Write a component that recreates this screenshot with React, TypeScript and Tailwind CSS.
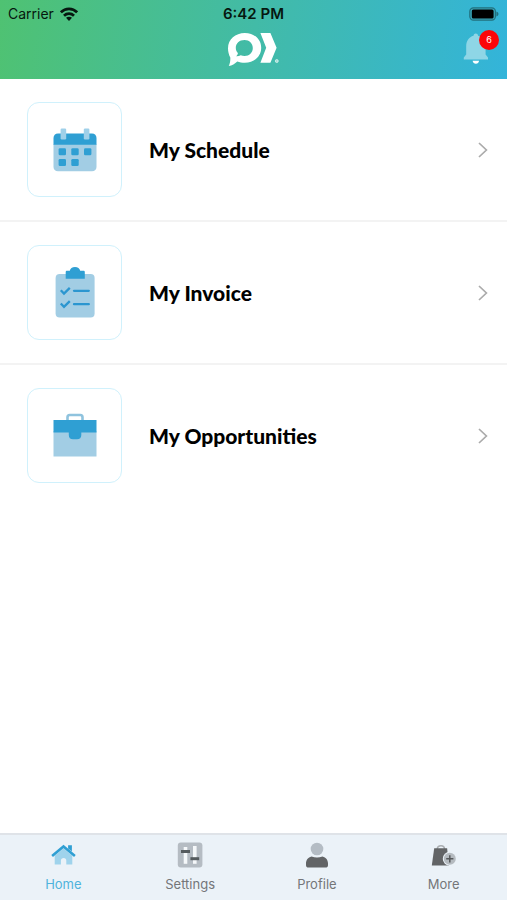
import type { ReactNode } from "react";

function WifiIcon() {
  return (
    <svg width="18" height="14" viewBox="0 0 18 14" aria-hidden="true">
      <g fill="none" stroke="#06170f" strokeWidth="2.7">
        <path d="M0.9 5.3C5.4 0.7 12.6 0.7 17.1 5.3" />
        <path d="M4 8.7C6.8 5.9 11.2 5.9 14 8.7" />
      </g>
      <path d="M9 13.9 6 10.8C7.7 9.3 10.3 9.3 12 10.8Z" fill="#06170f" />
    </svg>
  );
}

function BatteryIcon() {
  return (
    <svg width="30" height="14" viewBox="0 0 30 14" role="img" aria-label="Battery full">
      <rect x="0.8" y="0.8" width="25.6" height="12.4" rx="3.6" fill="#3aa9bd" stroke="#22717f" strokeWidth="1.2" />
      <rect x="2.8" y="2.4" width="21.8" height="9.2" rx="1.6" fill="#000" />
      <path d="M27.4 4.6C30.1 5.3 30.1 8.7 27.4 9.4Z" fill="#22717f" />
    </svg>
  );
}

function Logo() {
  return (
    <svg width="52" height="36" viewBox="0 0 52 36" role="img" aria-label="Logo">
      <path
        fill="#fff"
        fillRule="evenodd"
        d="M17.8 1C27.3 1 34.2 7.2 34.2 15.8S27.3 30.8 17.8 30.8C15 30.8 12.5 30.3 10.3 29.4 8 31.7 5 33.3 1.8 34.1 3 31.5 3.5 28.7 3.3 25.5 1.8 22.7 1 19.5 1 16.2 1 7.4 8.4 1 17.8 1ZM17.6 8C12.2 8 8.8 11.4 8.8 15.9 8.8 17.9 9.6 19.7 10.9 21 10.8 22.3 10.2 23.2 9.2 24.2 11 24.3 12.5 23.9 13.7 23.2 14.9 23.7 16.2 23.9 17.6 23.9 22.3 23.9 25.8 20.5 25.8 15.9S22.3 8 17.6 8Z"
      />
      <path fill="#fff" d="M33.4 1H43.4L49.6 15.8 43.4 30.8H33.4L39.2 15.8Z" />
      <circle cx="49.8" cy="29" r="1.5" fill="#fff" fillOpacity="0.5" stroke="#fff" strokeOpacity="0.7" strokeWidth="0.8" />
    </svg>
  );
}

function BellIcon() {
  return (
    <svg width="26" height="32" viewBox="0 0 26 32" aria-hidden="true">
      <path
        fill="#8ed6e6"
        d="M12.8 1.4C14 1.4 14.9 2.3 15.1 3.7 19.8 4.9 22.6 9 22.6 14V22.5L25 25.6V27.6H.8V25.6L3.2 22.5V14C3.2 9 5.9 4.9 10.5 3.7 10.7 2.3 11.6 1.4 12.8 1.4Z"
      />
      <path fill="#fff" d="M9.6 28.8H16.1C15.8 30.7 14.6 31.8 12.9 31.8S9.9 30.7 9.6 28.8Z" />
    </svg>
  );
}

function CalendarIcon() {
  return (
    <svg width="44" height="44" viewBox="0 0 44 44" aria-hidden="true">
      <path fill="#a2cde4" d="M.5 16H43.5V39C43.5 41.5 41.8 43.3 39 43.3H5C2.2 43.3.5 41.5.5 39Z" />
      <path fill="#2f9fd3" d="M5 5.5H39C41.8 5.5 43.5 7.4 43.5 10V16.8H.5V10C.5 7.4 2.2 5.5 5 5.5Z" />
      <g fill="#9fd0e9">
        <rect x="7.6" y=".6" width="5.6" height="10.8" rx="1.2" />
        <rect x="30.8" y=".6" width="5.6" height="10.8" rx="1.2" />
      </g>
      <g fill="#2f9fd3">
        <rect x="5.6" y="20.2" width="7.4" height="7" rx="1.3" />
        <rect x="18.3" y="20.2" width="7.4" height="7" rx="1.3" />
        <rect x="31" y="20.2" width="7.4" height="7" rx="1.3" />
        <rect x="5.6" y="31" width="7.4" height="7" rx="1.3" />
        <rect x="18.3" y="31" width="7.4" height="7" rx="1.3" />
      </g>
    </svg>
  );
}

function ClipboardIcon() {
  return (
    <svg width="40" height="54" viewBox="0 0 40 54" aria-hidden="true">
      <rect x=".6" y="8" width="39" height="43.5" rx="4" fill="#a2cde4" />
      <path fill="#2f9fd3" d="M10.7 12.8V6.2C10.7 5.2 11.2 4.8 12 4.8H14.8C15.2 2.4 17.2 1 20 1S24.8 2.4 25.2 4.8H28.4C29.3 4.8 29.8 5.2 29.8 6.2V12.8Z" />
      <g fill="none" stroke="#2b96d0" strokeWidth="2.3">
        <path d="M5.8 24.3 9 27.6 14.8 21.9M5.8 37.5 9 40.8 14.8 35.1" />
        <path strokeLinecap="round" d="M19 24.8H33.8M19 38.2H33.8" />
      </g>
    </svg>
  );
}

function BriefcaseIcon() {
  return (
    <svg width="44" height="46" viewBox="0 0 44 46" aria-hidden="true">
      <path fill="none" stroke="#8fc3de" strokeWidth="2.6" d="M14.5 7V4.3C14.5 2.8 15.2 2 16.7 2H27.3C28.8 2 29.5 2.8 29.5 4.3V7" />
      <path fill="#a2cde4" d="M.5 18H43.5V43.5H.5Z" />
      <path fill="#2f9fd3" d="M.5 7H43.5V19.5H28.3V22C28.3 24.8 26.8 26.2 24 26.2H20C17.2 26.2 15.8 24.8 15.8 22V19.5H.5Z" />
    </svg>
  );
}

function ChevronIcon() {
  return (
    <svg width="12" height="18" viewBox="0 0 12 18" aria-hidden="true">
      <path d="M2 2 9.4 9 2 16" fill="none" stroke="#ababab" strokeWidth="1.7" />
    </svg>
  );
}

function HomeIcon() {
  return (
    <svg width="26" height="26" viewBox="-0.5 0 26 26" aria-hidden="true">
      <path fill="#9fd3ec" d="M4.2 13.8 13 6.6 21.8 13.8V22.6H15.8V18.8C15.8 17 14.8 16 13.2 16S10.4 17 10.4 18.8V22.6H4.2Z" />
      <path fill="#2f9fd3" d="M17.6 3.2H21.4V9.6L17.6 6.4Z" />
      <path fill="none" stroke="#2f9fd3" strokeWidth="2.6" d="M1.6 14 13 4.4 24.4 14" />
    </svg>
  );
}

function SlidersIcon() {
  return (
    <svg width="26" height="26" viewBox="0 0 26 26" aria-hidden="true">
      <rect x=".8" y=".5" width="24.6" height="25" rx="3" fill="#b5bcc3" />
      <g fill="#f5f8fa">
        <rect x="6.7" y="5" width="3.6" height="16.8" />
        <rect x="16" y="4" width="3.6" height="17.8" />
      </g>
      <g fill="#555b5e">
        <rect x="4" y="8" width="9" height="3" />
        <rect x="13.4" y="15.2" width="8.8" height="3" />
      </g>
    </svg>
  );
}

function PersonIcon() {
  return (
    <svg width="26" height="26" viewBox="0 0 26 26" aria-hidden="true">
      <circle cx="13" cy="7" r="6.3" fill="#b4bcc4" />
      <path fill="#626466" d="M7.5 14.4Q13 16.6 18.5 14.4C22 15.2 24 18 24 21.5V23.2C24 24.7 23 25.6 21.5 25.6H4.5C3 25.6 2 24.7 2 23.2V21.5C2 18 4 15.2 7.5 14.4Z" />
    </svg>
  );
}

function BagIcon() {
  return (
    <svg width="26" height="26" viewBox="0 0 26 26" aria-hidden="true">
      <path fill="none" stroke="#a9adb0" strokeWidth="1.5" d="M6.2 7.2C6.4 4.7 7.5 3.8 10 3.8S13.4 4.7 13.6 7.2" />
      <path fill="#626466" d="M3.2 6.3H16.1L18 23.4H.8Z" />
      <circle cx="18.8" cy="16.8" r="7" fill="#ebf2f8" />
      <circle cx="18.8" cy="16.8" r="6" fill="#b5bbc0" />
      <path stroke="#55585a" strokeWidth="1.5" d="M18.8 13.2V20.4M15.2 16.8H22.4" />
    </svg>
  );
}

function MenuRow({ icon, label }: { icon: ReactNode; label: string }) {
  return (
    <li className="border-b-2 border-[#f3f3f3] last:border-transparent">
      <button type="button" className="flex w-full items-center py-[23px] pr-[18px] pl-[27px] text-left">
        <span className="flex size-[95px] shrink-0 items-center justify-center rounded-xl border border-[#d0f1fc]">
          {icon}
        </span>
        <span className="ml-[27px] flex-1 text-[21px] leading-8 font-black text-black">{label}</span>
        <ChevronIcon />
      </button>
    </li>
  );
}

function Tab({ icon, label, active = false }: { icon: ReactNode; label: string; active?: boolean }) {
  return (
    <a
      href="#"
      aria-current={active ? "page" : undefined}
      className={`flex flex-1 flex-col items-center gap-1.5 pt-[7px] pb-1.5 font-[Inter,sans-serif] text-[13px] leading-5 ${
        active ? "text-[#4fb3dc]" : "text-[#747678]"
      }`}
    >
      {icon}
      {label}
    </a>
  );
}

export default function App() {
  return (
    <div className="flex min-h-screen flex-col bg-white font-[Lato,sans-serif]">
      <header className="bg-linear-[98deg] from-[#4fc272] via-[#42bba7] to-[#33b4da] px-2">
        <div className="grid h-7 grid-cols-3 items-center font-[Inter,sans-serif] text-sm text-[#06170f]">
          <span className="flex items-center gap-1.5">
            Carrier
            <WifiIcon />
          </span>
          <time className="text-center text-[15px] font-semibold">6:42 PM</time>
          <span className="flex justify-end">
            <BatteryIcon />
          </span>
        </div>
        <div className="grid h-[51px] grid-cols-3 items-start pt-1">
          <span />
          <span className="flex justify-center">
            <Logo />
          </span>
          <button type="button" aria-label="Notifications" className="relative mr-2.5 justify-self-end">
            <BellIcon />
            <span className="absolute -top-0.5 -right-2.5 flex size-5 items-center justify-center rounded-full bg-[#fb0509] font-[Inter,sans-serif] text-[9px] text-white">
              6
            </span>
          </button>
        </div>
      </header>

      <main className="flex-1">
        <ul>
          <MenuRow icon={<CalendarIcon />} label="My Schedule" />
          <MenuRow icon={<ClipboardIcon />} label="My Invoice" />
          <MenuRow icon={<BriefcaseIcon />} label="My Opportunities" />
        </ul>
      </main>

      <nav className="flex border-t-2 border-[#dfe3e8] bg-[#ebf2f8]">
        <Tab icon={<HomeIcon />} label="Home" active />
        <Tab icon={<SlidersIcon />} label="Settings" />
        <Tab icon={<PersonIcon />} label="Profile" />
        <Tab icon={<BagIcon />} label="More" />
      </nav>
    </div>
  );
}
